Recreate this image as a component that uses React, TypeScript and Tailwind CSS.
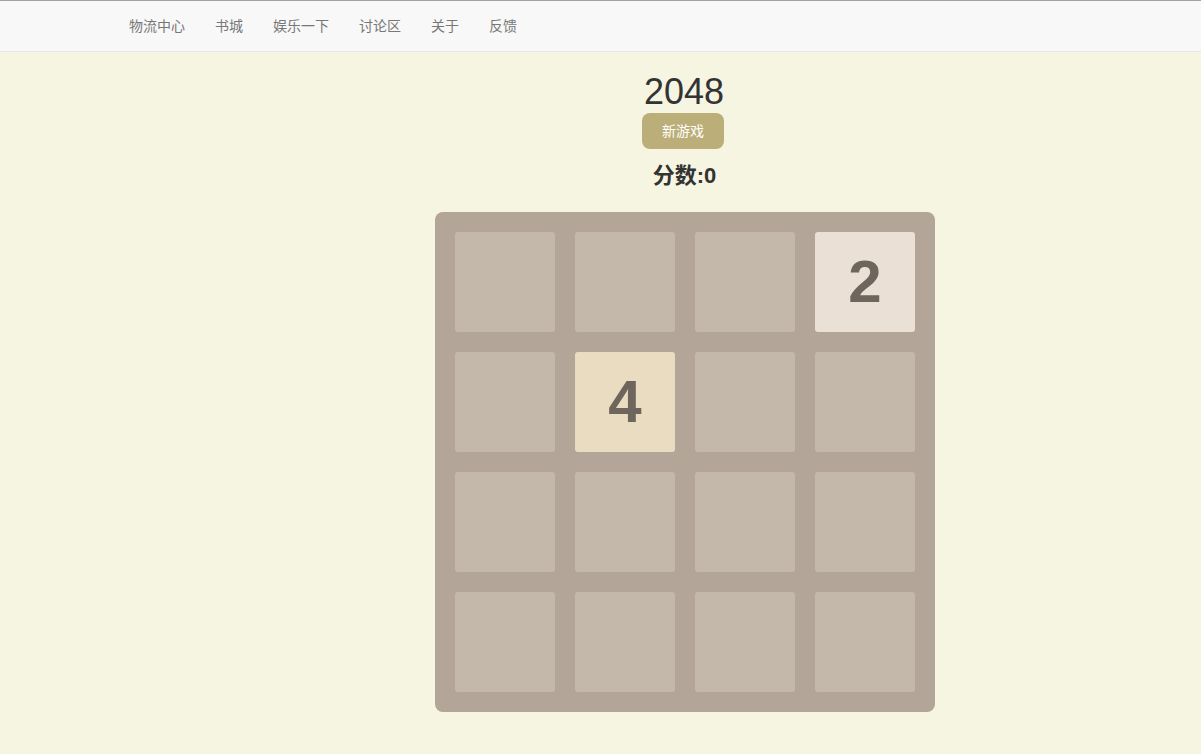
import React from "react";

const grid: (number | null)[][] = [
  [null, null, null, 2],
  [null, 4, null, null],
  [null, null, null, null],
  [null, null, null, null],
];

function Tile({ v }: { v: number | null }) {
  if (v === 2)
    return (
      <div className="w-[100px] h-[100px] rounded-[3px] bg-[#eae0d6] flex items-center justify-center text-[60px] font-bold text-[#6e665c] leading-none">
        2
      </div>
    );
  if (v === 4)
    return (
      <div className="w-[100px] h-[100px] rounded-[3px] bg-[#e9dcc1] flex items-center justify-center text-[60px] font-bold text-[#6e665c] leading-none">
        4
      </div>
    );
  return <div className="w-[100px] h-[100px] rounded-[3px] bg-[#c4b8aa]" />;
}

export default function App() {
  const links = ["物流中心", "书城", "娱乐一下", "讨论区", "关于", "反馈"];
  return (
    <div
      className="min-h-[754px] bg-[#f5f5e1]"
      style={{ fontFamily: '"Liberation Sans", "Noto Sans CJK SC", Arial, sans-serif' }}
    >
      <div className="h-px bg-[#a3a3a3]" />
      <nav className="h-[51px] bg-[#f8f8f8] border-b border-[#e7e7e7] flex items-center pl-[114px]">
        {links.map((l) => (
          <a key={l} className="px-[15px] text-[14px] text-[#777] leading-[20px]">
            {l}
          </a>
        ))}
      </nav>
      <div className="ml-[435px] w-[500px] flex flex-col items-center">
        <h1 className="mt-[20px] text-[36px] leading-[40px] text-[#333] font-normal -ml-[2px]">2048</h1>
        <button className="mt-[1px] w-[82px] h-[36px] rounded-[8px] bg-[#bcae78] text-white text-[14px] -ml-[4px]">
          新游戏
        </button>
        <div className="mt-[13px] text-[22px] font-bold text-[#333] leading-[28px] -ml-[1px]">分数:0</div>
        <div className="mt-[22px] w-[500px] h-[500px] rounded-[8px] bg-[#b3a597] p-[20px] grid grid-cols-4 gap-[20px]">
          {grid.flat().map((v, i) => (
            <Tile key={i} v={v} />
          ))}
        </div>
      </div>
    </div>
  );
}
